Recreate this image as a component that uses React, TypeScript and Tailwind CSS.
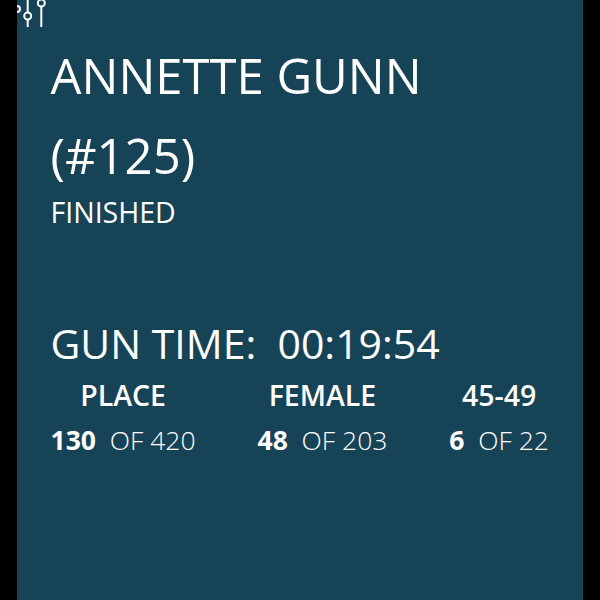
const stats = [
  { label: "PLACE", rank: "130", total: "OF 420" },
  { label: "FEMALE", rank: "48", total: "OF 203" },
  { label: "45-49", rank: "6", total: "OF 22" },
];

function Sliders() {
  return (
    <svg width="46" height="28" viewBox="0 0 46 28" fill="none" stroke="#ffffff" strokeWidth="2" className="block">
      <circle cx="0" cy="9" r="3" />
      <path d="M10.7 0V12M10.7 20V27" />
      <circle cx="10.7" cy="16" r="3.5" />
      <path d="M24.3 7V27" />
      <circle cx="24.3" cy="3" r="3.5" />
    </svg>
  );
}

export default function App() {
  return (
    <div className="w-[600px] h-[600px] bg-black px-[17px] overflow-hidden font-['Open_Sans',sans-serif] text-white">
      <div className="relative h-full bg-[#174356] pl-[33.5px] pr-[34px] pt-[35px]">
        <div className="absolute left-0 top-0">
          <Sliders />
        </div>
        <h1 className="text-[49px] leading-[80px] font-normal">
          ANNETTE GUNN
          <br />
          (#125)
        </h1>
        <div className="-mt-[1px] text-[28.5px] leading-[36px]">FINISHED</div>
        <div className="mt-[86px] text-[41px] leading-[54px] whitespace-pre">GUN TIME:  00:19:54</div>
        <div className="mt-[7px] flex justify-between">
          {stats.map((s) => (
            <div key={s.label} className="flex flex-col items-center">
              <div className="text-[28.5px] leading-[36px] font-semibold">{s.label}</div>
              <div className="mt-[9px] text-[26.5px] leading-[36px] whitespace-pre">
                <span className="font-bold">{s.rank}</span>
                {"  "}
                <span className="font-light">{s.total}</span>
              </div>
            </div>
          ))}
        </div>
      </div>
    </div>
  );
}
